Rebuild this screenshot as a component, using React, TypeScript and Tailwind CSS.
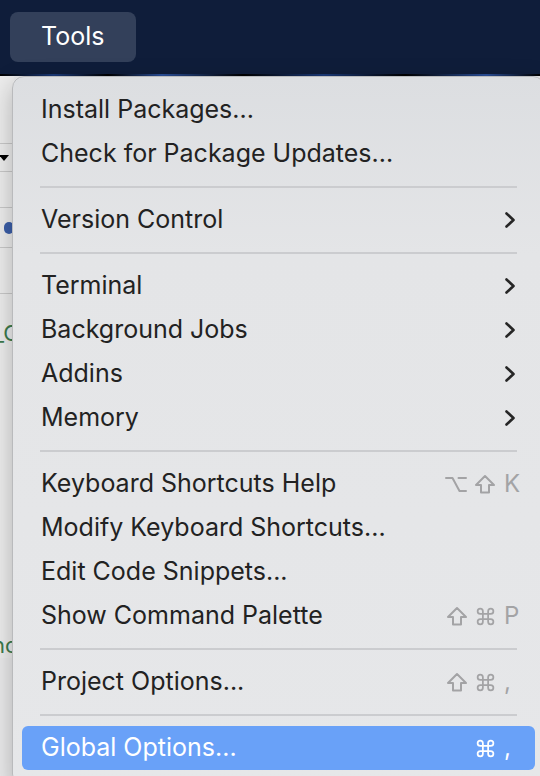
import type { ReactNode } from 'react'
import { Command } from 'lucide-react'

type Item =
    | { kind: 'item'; label: string; sub?: boolean; keys?: string[]; active?: boolean }
    | { kind: 'sep' }

const items: Item[] = [
    { kind: 'item', label: 'Install Packages...' },
    { kind: 'item', label: 'Check for Package Updates...' },
    { kind: 'sep' },
    { kind: 'item', label: 'Version Control', sub: true },
    { kind: 'sep' },
    { kind: 'item', label: 'Terminal', sub: true },
    { kind: 'item', label: 'Background Jobs', sub: true },
    { kind: 'item', label: 'Addins', sub: true },
    { kind: 'item', label: 'Memory', sub: true },
    { kind: 'sep' },
    { kind: 'item', label: 'Keyboard Shortcuts Help', keys: ['opt', 'shift', 'K'] },
    { kind: 'item', label: 'Modify Keyboard Shortcuts...' },
    { kind: 'item', label: 'Edit Code Snippets...' },
    { kind: 'item', label: 'Show Command Palette', keys: ['shift', 'cmd', 'P'] },
    { kind: 'sep' },
    { kind: 'item', label: 'Project Options...', keys: ['shift', 'cmd', ','] },
    { kind: 'sep' },
    { kind: 'item', label: 'Global Options...', keys: ['cmd', ','], active: true },
]

function Chevron() {
    return (
        <svg width="12" height="18" viewBox="0 0 12 18" className="text-[#262626]">
            <polyline points="2.5,2.5 9.5,9 2.5,15.5" fill="none" stroke="currentColor" strokeWidth="2.6" strokeLinecap="round" strokeLinejoin="round" />
        </svg>
    )
}

function ShiftIcon() {
    return (
        <svg width="22" height="20" viewBox="0 0 22 20">
            <path d="M11 2 L20 11 L15 11 L15 18.5 L7 18.5 L7 11 L2 11 Z" fill="none" stroke="currentColor" strokeWidth="2" strokeLinejoin="round" />
        </svg>
    )
}

function OptionIcon() {
    return (
        <svg width="22" height="20" viewBox="0 0 22 20">
            <path d="M1 4 H7.5 L14.5 17 H21 M13.5 4 H21" fill="none" stroke="currentColor" strokeWidth="2" strokeLinecap="round" strokeLinejoin="round" />
        </svg>
    )
}

function Keys({ keys, active }: { keys: string[]; active?: boolean }) {
    return (
        <div className={`flex items-center gap-[7px] mr-[-4px] text-[24px] leading-none ${active ? 'text-white' : 'text-[#a3a3a5]'}`}>
            {keys.map((k, i) => {
                if (k === 'shift') return <ShiftIcon key={i} />
                if (k === 'opt') return <OptionIcon key={i} />
                if (k === 'cmd') return <Command key={i} size={21} strokeWidth={2} />
                return (
                    <span key={i} className="w-[16px] text-left ml-[1px]">{k}</span>
                )
            })}
        </div>
    )
}

function Row({ children, active }: { children: ReactNode; active?: boolean }) {
    return (
        <div className={`h-[44px] flex items-center justify-between pl-[19px] pr-[19px] rounded-[6px] ${active ? 'bg-[#69a1f8] text-white' : 'text-[#222222]'}`}>
            {children}
        </div>
    )
}

export default function App() {
    return (
        <div className="relative w-[540px] h-[776px] overflow-hidden bg-[#e9e9ea] font-['Inter','Liberation_Sans',sans-serif]">
            {/* title bar */}
            <div className="h-[74px] bg-[#0f1d3a] flex items-start pt-[12px] pl-[10px]">
                <div className="w-[126px] h-[50px] rounded-[8px] bg-[#33405a] flex items-center pl-[31px] text-white text-[25px]">
                    Tools
                </div>
            </div>
            <div className="h-[2px] bg-[linear-gradient(90deg,#000_0%,#1b3a7a_10%,#000_20%,#2a4f9a_30%,#000_45%,#1b3a7a_60%,#000_75%,#2a4f9a_90%,#000_100%)]" />

            {/* app content behind menu */}
            <div className="w-[14px] flex flex-col bg-[#ececec] overflow-hidden">
                <div className="h-[68px] border-b border-[#c8c8c8]" />
                <div className="h-[28px] border-b border-[#c8c8c8] flex items-center">
                    <span className="block w-0 h-0 border-l-[5px] border-r-[5px] border-t-[6px] border-l-transparent border-r-transparent border-t-black ml-[-1px]" />
                </div>
                <div className="h-[36px] border-b border-[#c8c8c8]" />
                <div className="h-[40px] border-b border-[#c8c8c8] flex items-center">
                    <span className="block w-[12px] h-[12px] rounded-full bg-[#3b5ea8] ml-[4px]" />
                </div>
                <div className="h-[46px] border-b border-[#c8c8c8]" />
                <div className="h-[50px] flex items-end text-[#3d7a4c] text-[22px] leading-none">
                    <span className="ml-[-6px]">_C</span>
                </div>
                <div className="h-[290px]" />
                <div className="h-[24px] text-[#3d7a4c] text-[22px] leading-none">
                    <span className="ml-[-8px]">nc</span>
                </div>
            </div>

            {/* tools menu */}
            <div className="absolute left-[12px] top-[76px] w-[533px] h-[710px] rounded-[12px] border border-[#b9babc] bg-[linear-gradient(180deg,#dcdee1_0%,#e4e5e7_25%,#e6e7e9_100%)] shadow-[0_8px_24px_rgba(0,0,0,0.25)] px-[9px] pt-[11px] text-[25px]">
                {items.map((it, i) =>
                    it.kind === 'sep' ? (
                        <div key={i} className="h-[22px] flex items-center px-[18px]">
                            <div className="h-[2px] w-full bg-[#cbcccf]" />
                        </div>
                    ) : (
                        <Row key={i} active={it.active}>
                            <span>{it.label}</span>
                            {it.sub && <Chevron />}
                            {it.keys && <Keys keys={it.keys} active={it.active} />}
                        </Row>
                    )
                )}
            </div>
        </div>
    )
}
